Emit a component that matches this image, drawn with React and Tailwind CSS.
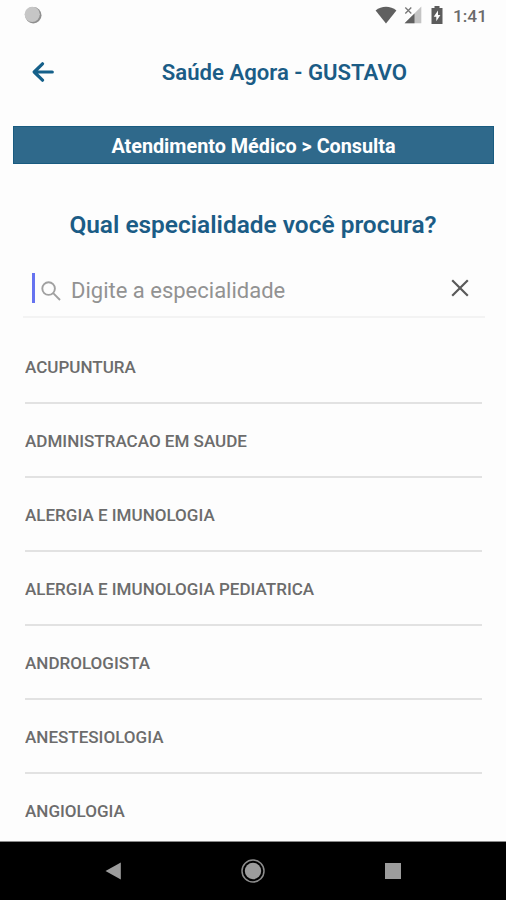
import React from 'react';

const specialties = [
  'ACUPUNTURA',
  'ADMINISTRACAO EM SAUDE',
  'ALERGIA E IMUNOLOGIA',
  'ALERGIA E IMUNOLOGIA PEDIATRICA',
  'ANDROLOGISTA',
  'ANESTESIOLOGIA',
  'ANGIOLOGIA',
];

const StatusBar = () => (
  <div className="h-8 shrink-0 flex items-center justify-between pl-6 pr-[19px]">
    <svg className="w-[18px] h-[18px] mb-[2px]" viewBox="0 0 18 18">
      <circle cx="9.3" cy="9.3" r="8.2" fill="#8f8f8f" />
      <circle cx="8.2" cy="8.3" r="7.6" fill="#c6c6c6" />
    </svg>
    <div className="flex items-center">
      <svg className="w-[22px] h-[18px] mr-[7px] mb-[2px]" viewBox="0 0 22 18">
        <path d="M0.6 4.4C6.5-0.6 15.5-0.6 21.4 4.4L11 17.4Z" fill="#606060" />
      </svg>
      <svg className="w-[18px] h-[18px] mr-[9px] mb-[2px]" viewBox="0 0 18 18">
        <path d="M17.3 0.6V17.3H0.6Z" fill="#c4c4c4" />
        <path d="M10.5 7.4V17.3H0.6Z" fill="#606060" />
        <path d="M1.3 1.5L7.3 7.5M7.3 1.5L1.3 7.5" stroke="#777777" strokeWidth="1.3" />
      </svg>
      <svg className="w-3 h-[18px] mr-[10px] mb-[2px]" viewBox="0 0 12 18">
        <path d="M3.5 0H8.5V2H11.5V18H0.5V2H3.5Z" fill="#5c5c5c" />
        <path d="M7 4.5L2.7 10.7H5.3V15.2L9.4 8.9H7Z" fill="#fdfdfd" />
      </svg>
      <span className="text-[17.3px] leading-none pt-px font-medium text-[#6a6a6a]">1:41</span>
    </div>
  </div>
);

const Header = () => (
  <header className="h-[80px] shrink-0 flex items-center pl-8 pr-[99px]">
    <svg className="w-[22px] h-[20px]" viewBox="0 0 22 20" fill="none" stroke="#15608a" strokeWidth="3.2" strokeLinecap="round" strokeLinejoin="round">
      <path d="M10.5 1.8L2.2 10L10.5 18.2M2.5 10H20.3" />
    </svg>
    <h1 className="ml-auto text-[22.15px] leading-7 font-semibold text-[#1b5c86] whitespace-nowrap">Saúde Agora - GUSTAVO</h1>
  </header>
);

const SearchField = () => (
  <div className="ml-[23px] mr-[21px] h-[56px] mt-[21px] shrink-0 flex items-center border-b-2 border-[#f3f3f3] pl-[9px] pr-4">
    <div className="w-[3px] h-[30px] mb-[3px] bg-[#6673f0]" />
    <svg className="w-5 h-5 ml-[6px] mt-1" viewBox="0 0 20 20" fill="none" stroke="#a0a0a0" strokeWidth="1.9">
      <circle cx="7.6" cy="7.6" r="6.3" />
      <path d="M12.2 12.2L19 19" />
    </svg>
    <input
      type="text"
      placeholder="Digite a especialidade"
      className="ml-[10px] mt-[3px] flex-1 min-w-0 text-[22px] leading-7 bg-transparent outline-none placeholder:text-[#929292]"
    />
    <svg className="w-[18px] h-[18px] mb-[2px]" viewBox="0 0 18 18" stroke="#5a5a5a" strokeWidth="2.2">
      <path d="M1.2 1.2L16.8 16.8M16.8 1.2L1.2 16.8" />
    </svg>
  </div>
);

const SpecialtyList = () => (
  <ul className="flex-1 min-h-0 overflow-hidden mt-3 ml-[25px] mr-[24px]">
    {specialties.map((name) => (
      <li key={name} className="h-[74px] flex items-center border-b-2 border-[#e2e2e2] pt-1 text-[17.05px] font-medium text-[#6c6c6c] whitespace-nowrap">
        {name}
      </li>
    ))}
  </ul>
);

const NavigationBar = () => (
  <nav className="h-[59px] shrink-0 bg-black border-t border-[#8a8a8a] flex items-center justify-between px-[105px]">
    <svg className="w-4 h-[18px]" viewBox="0 0 16 18">
      <path d="M0.5 9L15.8 0.4V17.6Z" fill="#9c9c9c" />
    </svg>
    <svg className="w-6 h-6" viewBox="0 0 24 24">
      <circle cx="12" cy="12" r="11" fill="none" stroke="#8c8c8c" strokeWidth="1.5" />
      <circle cx="12" cy="12" r="8.2" fill="#9c9c9c" />
    </svg>
    <div className="w-4 h-4 bg-[#9c9c9c]" />
  </nav>
);

export default function App() {
  return (
    <div className="h-[900px] w-full flex flex-col bg-[#fdfdfd] overflow-hidden font-['Roboto',sans-serif]">
      <StatusBar />
      <Header />
      <div className="mt-[14px] h-[38px] shrink-0 ml-[13px] mr-3 flex items-center justify-center bg-[#2f698b] border border-[#195b80] pt-[3px]">
        <p className="text-[19.8px] leading-6 font-bold text-white whitespace-nowrap">Atendimento Médico &gt; Consulta</p>
      </div>
      <h2 className="mt-[45px] h-8 shrink-0 text-center text-[24.45px] leading-8 font-semibold text-[#1b5c86] whitespace-nowrap">Qual especialidade você procura?</h2>
      <SearchField />
      <SpecialtyList />
      <NavigationBar />
    </div>
  );
}
